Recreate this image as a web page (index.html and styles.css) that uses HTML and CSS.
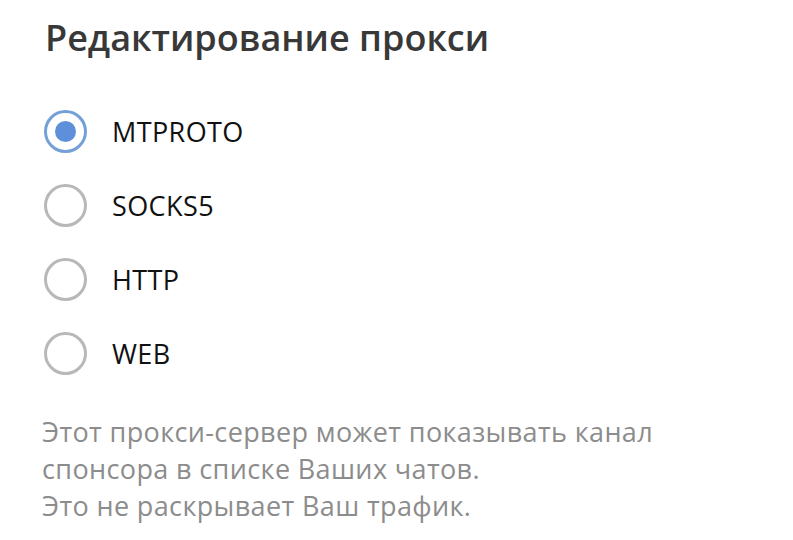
FILE: index.html
```html
<!DOCTYPE html>
<html lang="ru">
<head>
<meta charset="utf-8">
<link rel="stylesheet" href="styles.css">
</head>
<body>
<div class="page">
  <h1 class="title">Редактирование прокси</h1>
  <div class="options">
    <div class="option">
      <span class="radio checked"><span class="dot"></span></span>
      <span class="label">MTPROTO</span>
    </div>
    <div class="option">
      <span class="radio"></span>
      <span class="label">SOCKS5</span>
    </div>
    <div class="option">
      <span class="radio"></span>
      <span class="label">HTTP</span>
    </div>
    <div class="option">
      <span class="radio"></span>
      <span class="label">WEB</span>
    </div>
  </div>
  <p class="note">Этот прокси-сервер может показывать канал<br>спонсора в списке Ваших чатов.<br>Это не раскрывает Ваш трафик.</p>
</div>
</body>
</html>
```
FILE: styles.css
```css
html, body {
  margin: 0;
  padding: 0;
  background: #ffffff;
}
.page {
  font-family: "Open Sans", "Noto Sans", sans-serif;
  padding: 14px 0 0 45px;
}
.title {
  margin: 0;
  font-size: 36px;
  font-weight: 600;
  color: #383838;
  line-height: 48px;
}
.options {
  margin-top: 48px;
  display: flex;
  flex-direction: column;
  gap: 31px;
}
.option {
  display: flex;
  align-items: center;
  height: 43px;
  margin-left: -1px;
}
.radio {
  box-sizing: border-box;
  width: 43px;
  height: 43px;
  border-radius: 50%;
  border: 3.5px solid #b8b8b8;
  display: flex;
  align-items: center;
  justify-content: center;
  flex-shrink: 0;
}
.radio.checked {
  border-color: #74a0d8;
}
.dot {
  width: 21px;
  height: 21px;
  border-radius: 50%;
  background: #5d8fdb;
}
.label {
  margin-left: 25px;
  font-size: 27px;
  letter-spacing: 0.4px;
  color: #111111;
}
.note {
  margin: 38px 0 0 -3px;
  font-size: 27px;
  line-height: 37px;
  letter-spacing: 0.37px;
  color: #8c8c8c;
}
```
